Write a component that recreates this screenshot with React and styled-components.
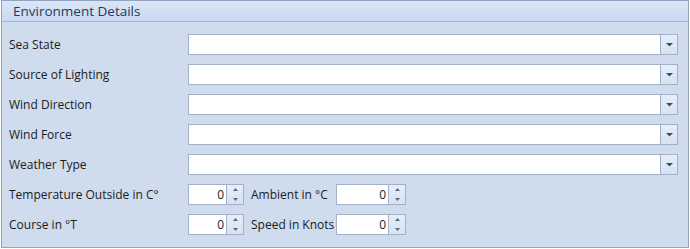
import styled, { createGlobalStyle } from "styled-components";

const GlobalStyle = createGlobalStyle`
  body {
    margin: 0;
    background: #ffffff;
    font-family: "Open Sans", "Liberation Sans", Arial, sans-serif;
  }
`;

function App() {
  const combos = [
    "Sea State",
    "Source of Lighting",
    "Wind Direction",
    "Wind Force",
    "Weather Type",
  ];

  return (
    <>
      <GlobalStyle />
      <Panel>
        <Header>Environment Details</Header>
        <Body>
          {combos.map((label) => (
            <Row key={label}>
              <Label>{label}</Label>
              <Combo>
                <ComboText />
                <ArrowButton>
                  <svg width="7" height="5" viewBox="0 0 7 5">
                    <path d="M0 1 H7 L3.5 4.5 Z" fill="#3f4e63" />
                  </svg>
                </ArrowButton>
              </Combo>
            </Row>
          ))}
          <Row>
            <Label>Temperature Outside in C°</Label>
            <SpinRow>
              <Spin value="0" width={56} />
              <InlineLabel>Ambient in °C</InlineLabel>
              <Spin value="0" width={70} />
            </SpinRow>
          </Row>
          <Row>
            <Label>Course in °T</Label>
            <SpinRow>
              <Spin value="0" width={56} />
              <InlineLabel>Speed in Knots</InlineLabel>
              <Spin value="0" width={70} />
            </SpinRow>
          </Row>
        </Body>
      </Panel>
    </>
  );
}

function Spin({ value, width }) {
  return (
    <SpinBox $width={width}>
      <SpinText>{value}</SpinText>
      <SpinButtons>
        <SpinHalf>
          <svg width="5" height="3" viewBox="0 0 5 3">
            <path d="M0 3 H5 L2.5 0 Z" fill="#5a6a80" />
          </svg>
        </SpinHalf>
        <SpinHalf>
          <svg width="5" height="3" viewBox="0 0 5 3">
            <path d="M0 0 H5 L2.5 3 Z" fill="#5a6a80" />
          </svg>
        </SpinHalf>
      </SpinButtons>
    </SpinBox>
  );
}

export default App;

const Panel = styled.section`
  width: 686px;
  height: 246px;
  margin-left: 1px;
  border: 1px solid #8fa5c4;
  background: #cfdcee;
  display: flex;
  flex-direction: column;
`;

const Header = styled.div`
  height: 20px;
  border-bottom: 1px solid #a4b8d4;
  background: linear-gradient(to bottom, #dbe6f5, #c7d9f1);
  color: #1e3a5f;
  font-size: 13.5px;
  line-height: 20px;
  padding-left: 11px;
`;

const Body = styled.div`
  padding: 12px 0 0 7px;
  display: flex;
  flex-direction: column;
  gap: 9px;
`;

const Row = styled.div`
  display: grid;
  grid-template-columns: 179px 1fr;
  align-items: center;
  height: 21px;
`;

const Label = styled.span`
  font-size: 12px;
  color: #1b1b1b;
  white-space: nowrap;
`;

const Combo = styled.div`
  width: 490px;
  height: 21px;
  box-sizing: border-box;
  border: 1px solid #a2b1c7;
  background: #ffffff;
  display: flex;
`;

const ComboText = styled.div`
  flex: 1;
`;

const ArrowButton = styled.div`
  width: 16px;
  border-left: 1px solid #a2b1c7;
  background: linear-gradient(to bottom, #e6eef9, #d6e2f3);
  display: flex;
  align-items: center;
  justify-content: center;
`;

const SpinRow = styled.div`
  display: flex;
  align-items: center;
`;

const InlineLabel = styled.span`
  font-size: 12px;
  color: #1b1b1b;
  white-space: nowrap;
  width: 92px;
  padding-left: 7px;
  box-sizing: border-box;
`;

const SpinBox = styled.div`
  width: ${(p) => p.$width}px;
  height: 21px;
  box-sizing: border-box;
  border: 1px solid #a2b1c7;
  background: #ffffff;
  display: flex;
`;

const SpinText = styled.div`
  flex: 1;
  text-align: right;
  padding-right: 2px;
  font-size: 12px;
  line-height: 19px;
  color: #1b1b1b;
`;

const SpinButtons = styled.div`
  width: 16px;
  border-left: 1px solid #a2b1c7;
  display: flex;
  flex-direction: column;
  background: linear-gradient(to bottom, #e6eef9, #d6e2f3);
`;

const SpinHalf = styled.div`
  flex: 1;
  display: flex;
  align-items: center;
  justify-content: center;
`;
